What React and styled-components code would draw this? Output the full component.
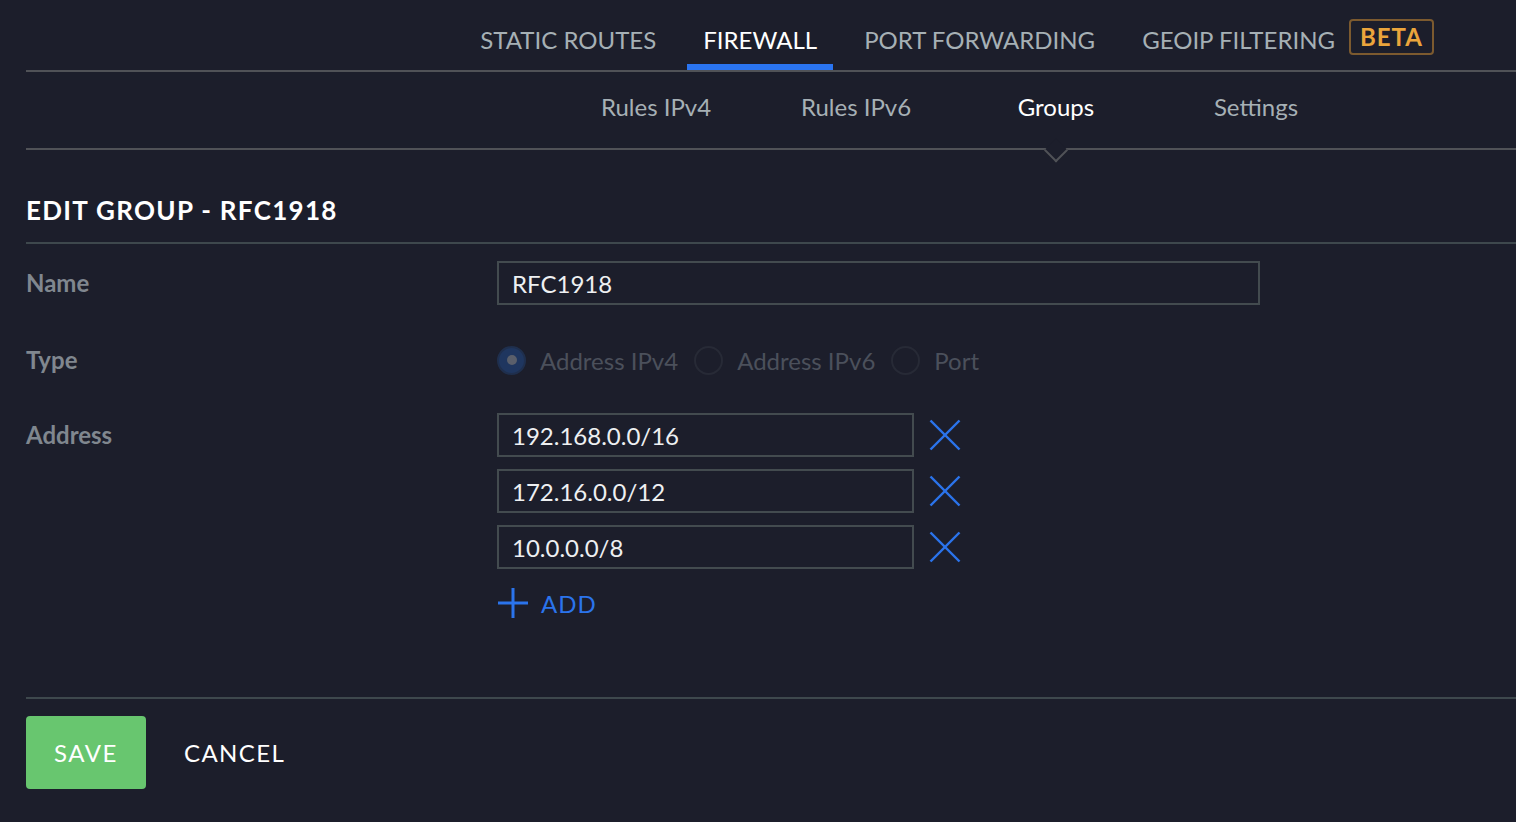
import styled, { createGlobalStyle } from 'styled-components'

const GlobalStyle = createGlobalStyle`
  html, body {
    margin: 0;
    padding: 0;
    background: #1c1e2b;
  }
  body {
    font-family: Lato, "Open Sans", sans-serif;
    color: #e6e8ea;
  }
`

const topTabs = ['STATIC ROUTES', 'FIREWALL', 'PORT FORWARDING', 'GEOIP FILTERING']
const subTabs = ['Rules IPv4', 'Rules IPv6', 'Groups', 'Settings']
const types = ['Address IPv4', 'Address IPv6', 'Port']
const addresses = ['192.168.0.0/16', '172.16.0.0/12', '10.0.0.0/8']

const CloseIcon = () => (
  <svg width="32" height="32" viewBox="0 0 32 32">
    <line x1="1.5" y1="1.5" x2="30.5" y2="30.5" stroke="#2b74ec" strokeWidth="2.4" />
    <line x1="30.5" y1="1.5" x2="1.5" y2="30.5" stroke="#2b74ec" strokeWidth="2.4" />
  </svg>
)

const PlusIcon = () => (
  <svg width="32" height="32" viewBox="0 0 32 32">
    <line x1="16" y1="1" x2="16" y2="31" stroke="#2b74ec" strokeWidth="3" />
    <line x1="1" y1="16" x2="31" y2="16" stroke="#2b74ec" strokeWidth="3" />
  </svg>
)

const App = () => {
  return (
    <Page>
      <GlobalStyle />
      <TopNav>
        {topTabs.map((t) => (
          <TopTab key={t} $active={t === 'FIREWALL'}>
            {t}
            {t === 'GEOIP FILTERING' && <Beta>BETA</Beta>}
          </TopTab>
        ))}
      </TopNav>
      <SubNav>
        {subTabs.map((t) => (
          <SubTab key={t} $active={t === 'Groups'}>
            {t}
            {t === 'Groups' && <Caret />}
          </SubTab>
        ))}
      </SubNav>

      <Title>EDIT GROUP - RFC1918</Title>

      <Form>
        <Row $top={17}>
          <Label>Name</Label>
          <Field>
            <TextInput $wide defaultValue="RFC1918" />
          </Field>
        </Row>

        <Row $top={33}>
          <Label>Type</Label>
          <RadioGroup>
            {types.map((t, i) => (
              <RadioItem key={t}>
                <Radio $checked={i === 0} />
                <RadioText>{t}</RadioText>
              </RadioItem>
            ))}
          </RadioGroup>
        </Row>

        <Row $top={31}>
          <Label>Address</Label>
          <AddressList>
            {addresses.map((a) => (
              <AddressRow key={a}>
                <TextInput defaultValue={a} />
                <IconButton>
                  <CloseIcon />
                </IconButton>
              </AddressRow>
            ))}
            <AddButton>
              <PlusIcon />
              <span>ADD</span>
            </AddButton>
          </AddressList>
        </Row>
      </Form>

      <Footer>
        <SaveButton>SAVE</SaveButton>
        <CancelButton>CANCEL</CancelButton>
      </Footer>
    </Page>
  )
}

const Page = styled.div`
  padding-left: 26px;
  min-height: 822px;
  box-sizing: border-box;
`

const TopNav = styled.nav`
  display: flex;
  justify-content: flex-end;
  padding-right: 66px;
  height: 70px;
  border-bottom: 2px solid #505257;
`

const TopTab = styled.div`
  position: relative;
  display: flex;
  align-items: center;
  padding: 9px 16px 0;
  margin-left: 15px;
  font-size: 24px;
  color: ${(p) => (p.$active ? '#ffffff' : '#a6b0b5')};
  white-space: nowrap;

  &::after {
    content: '';
    position: absolute;
    left: 0;
    right: 0;
    bottom: 0;
    height: 6px;
    background: ${(p) => (p.$active ? '#2a74f0' : 'transparent')};
  }
`

const Beta = styled.span`
  margin-left: 14px;
  padding: 0 9px;
  height: 32px;
  line-height: 32px;
  border: 2px solid #7c5a2f;
  border-radius: 4px;
  color: #eba53c;
  font-weight: 700;
  letter-spacing: 1px;
  margin-top: -6px;
`

const SubNav = styled.nav`
  display: flex;
  justify-content: flex-end;
  padding-right: 160px;
  height: 76px;
  border-bottom: 2px solid #505257;
`

const SubTab = styled.div`
  position: relative;
  width: 200px;
  box-sizing: border-box;
  padding-bottom: 8px;
  display: flex;
  align-items: center;
  justify-content: center;
  font-size: 24px;
  color: ${(p) => (p.$active ? '#ffffff' : '#a6b0b5')};
`

const Caret = styled.span`
  position: absolute;
  left: 50%;
  bottom: -11px;
  width: 15px;
  height: 15px;
  background: #1c1e2b;
  border-right: 2px solid #505257;
  border-bottom: 2px solid #505257;
  transform: translateX(-50%) rotate(45deg);
`

const Title = styled.h1`
  margin: 44px 0 0;
  padding-bottom: 16px;
  line-height: 32px;
  font-size: 26px;
  font-weight: 700;
  letter-spacing: 1.3px;
  color: #ffffff;
  border-bottom: 2px solid #3e484d;
`

const Form = styled.div`
  display: flex;
  flex-direction: column;
  padding-bottom: 78px;
  border-bottom: 2px solid #3e484d;
`

const Row = styled.div`
  display: flex;
  align-items: flex-start;
  margin-top: ${(p) => p.$top}px;
`

const Label = styled.div`
  width: 471px;
  flex-shrink: 0;
  line-height: 44px;
  font-size: 24px;
  font-weight: 700;
  color: #80878f;
`

const Field = styled.div`
  display: flex;
`

const TextInput = styled.input`
  box-sizing: border-box;
  width: ${(p) => (p.$wide ? '763px' : '417px')};
  height: 44px;
  padding: 0 13px;
  background: transparent;
  border: 2px solid #434b4f;
  border-radius: 0;
  outline: none;
  font-family: Lato, sans-serif;
  font-size: 24px;
  color: #eef0f2;
`

const RadioGroup = styled.div`
  display: flex;
  align-items: center;
  height: 44px;
`

const RadioItem = styled.label`
  display: flex;
  align-items: center;
  margin-right: 16px;
`

const Radio = styled.span`
  position: relative;
  box-sizing: border-box;
  width: 29px;
  height: 29px;
  border-radius: 50%;
  border: 2px solid ${(p) => (p.$checked ? '#1f2f4d' : '#272a36')};
  background: ${(p) => (p.$checked ? '#1f365f' : 'transparent')};
  margin-right: 14px;

  &::after {
    content: '';
    display: ${(p) => (p.$checked ? 'block' : 'none')};
    position: absolute;
    left: 50%;
    top: 50%;
    width: 10px;
    height: 10px;
    border-radius: 50%;
    background: #5a5f6b;
    transform: translate(-50%, -50%);
  }
`

const RadioText = styled.span`
  font-size: 24px;
  color: #4b505b;
`

const AddressList = styled.div`
  display: flex;
  flex-direction: column;
  gap: 12px;
`

const AddressRow = styled.div`
  display: flex;
  align-items: center;
`

const IconButton = styled.button`
  display: flex;
  margin-left: 15px;
  padding: 0;
  border: none;
  background: none;
  cursor: pointer;
`

const AddButton = styled.button`
  display: flex;
  align-items: center;
  gap: 12px;
  margin-top: 6px;
  padding: 0;
  border: none;
  background: none;
  font-family: Lato, sans-serif;
  font-size: 24px;
  letter-spacing: 1px;
  color: #2b74ec;
  cursor: pointer;
`

const Footer = styled.div`
  display: flex;
  align-items: center;
  padding-top: 17px;
`

const SaveButton = styled.button`
  width: 120px;
  height: 73px;
  border: none;
  border-radius: 4px;
  background: #68c66f;
  color: #ffffff;
  font-family: Lato, sans-serif;
  font-size: 24px;
  letter-spacing: 1.6px;
  cursor: pointer;
`

const CancelButton = styled.button`
  margin-left: 26px;
  padding: 0 12px;
  border: none;
  background: none;
  color: #ffffff;
  font-family: Lato, sans-serif;
  font-size: 24px;
  letter-spacing: 1.4px;
  cursor: pointer;
`

export default App
